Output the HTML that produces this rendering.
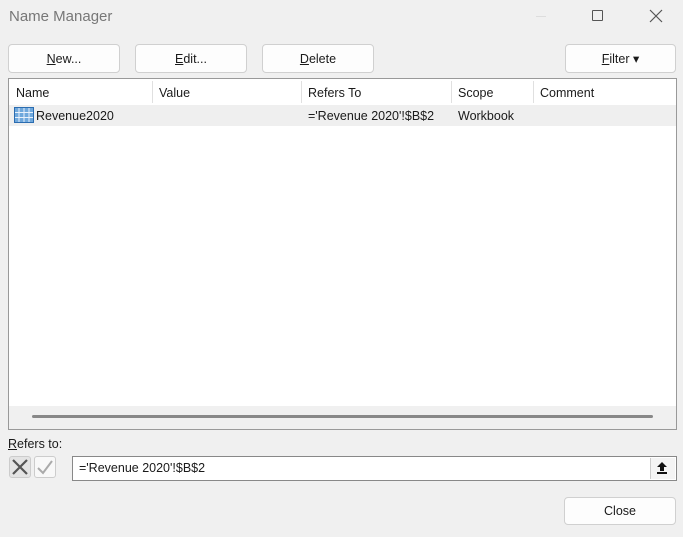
<!DOCTYPE html>
<html><head><style>
*{box-sizing:border-box;margin:0;padding:0}
body{width:683px;height:537px;background:#f0f0f0;font-family:"Liberation Sans",sans-serif;font-size:12.5px;color:#1a1a1a;position:relative;overflow:hidden}
.a{position:absolute}
.btn{position:absolute;background:#fdfdfd;border:1px solid #d0d0d0;border-radius:4px;text-align:center;line-height:29px;font-size:12.5px}
u{text-decoration:underline}
.hd{position:absolute;top:7px;font-size:12.5px}
.div{position:absolute;top:2px;height:22px;width:1px;background:#e0e0e0}
</style></head><body>
<div class="a" style="left:9px;top:8px;font-size:15px;color:#777">Name Manager</div>
<div class="a" style="left:536px;top:16px;width:10px;height:1px;background:#ddd"></div>
<div class="a" style="left:592px;top:10px;width:11px;height:11px;border:1px solid #555;border-radius:1px"></div>
<svg class="a" style="left:649px;top:9px" width="14" height="14"><path d="M1 1L13 13M13 1L1 13" stroke="#555" stroke-width="1.2"/></svg>
<div class="btn" style="left:8px;top:44px;width:112px;height:29px"><u>N</u>ew...</div>
<div class="btn" style="left:135px;top:44px;width:112px;height:29px"><u>E</u>dit...</div>
<div class="btn" style="left:262px;top:44px;width:112px;height:29px"><u>D</u>elete</div>
<div class="btn" style="left:565px;top:44px;width:111px;height:29px"><u>F</u>ilter ▾</div>
<div class="a" style="left:8px;top:78px;width:669px;height:352px;background:#fff;border:1px solid #999">
 <div class="hd" style="left:7px">Name</div>
 <div class="div" style="left:143px"></div><div class="hd" style="left:150px">Value</div>
 <div class="div" style="left:292px"></div><div class="hd" style="left:299px">Refers To</div>
 <div class="div" style="left:442px"></div><div class="hd" style="left:449px">Scope</div>
 <div class="div" style="left:524px"></div><div class="hd" style="left:531px">Comment</div>
 <div class="a" style="left:0;top:26px;width:667px;height:21px;background:#efefef"></div>
 <svg class="a" style="left:5px;top:28px" width="20" height="16"><rect x="0.5" y="0.5" width="19" height="15" fill="#6fa8dc" stroke="#2b6cb0"/><path d="M5 1V15M10 1V15M15 1V15M1 5.5H19M1 10.5H19" stroke="#e8f1fb" stroke-width="1"/></svg>
 <div class="a" style="left:27px;top:30px">Revenue2020</div>
 <div class="a" style="left:299px;top:30px">='Revenue 2020'!$B$2</div>
 <div class="a" style="left:449px;top:30px">Workbook</div>
 <div class="a" style="left:0;top:327px;width:667px;height:23px;background:#f0f0f0"></div>
 <div class="a" style="left:23px;top:336px;width:621px;height:3px;background:#888;border-radius:2px"></div>
</div>
<div class="a" style="left:8px;top:437px"><u>R</u>efers to:</div>
<div class="a" style="left:9px;top:456px;width:22px;height:22px;background:#e4e4e4;border:1px solid #ccc;border-radius:3px"></div>
<svg class="a" style="left:12px;top:459px" width="16" height="16"><path d="M1 1L15 15M15 1L1 15" stroke="#555" stroke-width="2.2"/></svg>
<div class="a" style="left:34px;top:456px;width:22px;height:22px;background:#f8f8f8;border:1px solid #ccc;border-radius:3px"></div>
<svg class="a" style="left:37px;top:459px" width="16" height="16"><path d="M1 9L6 14L15 2" stroke="#aaa" stroke-width="2" fill="none"/></svg>
<div class="a" style="left:72px;top:456px;width:605px;height:25px;background:#fff;border:1px solid #888;padding-left:6px;line-height:23px">='Revenue 2020'!$B$2</div>
<div class="a" style="left:650px;top:458px;width:25px;height:21px;background:#f4f4f4;border-left:1px solid #ccc"></div>
<svg class="a" style="left:656px;top:461px" width="12" height="14"><path d="M6 1L1 6H4V10H8V6H11Z" fill="#111"/><rect x="1" y="11" width="10" height="2" fill="#111"/></svg>
<div class="btn" style="left:564px;top:497px;width:112px;height:28px;line-height:27px">Close</div>
</body></html>
